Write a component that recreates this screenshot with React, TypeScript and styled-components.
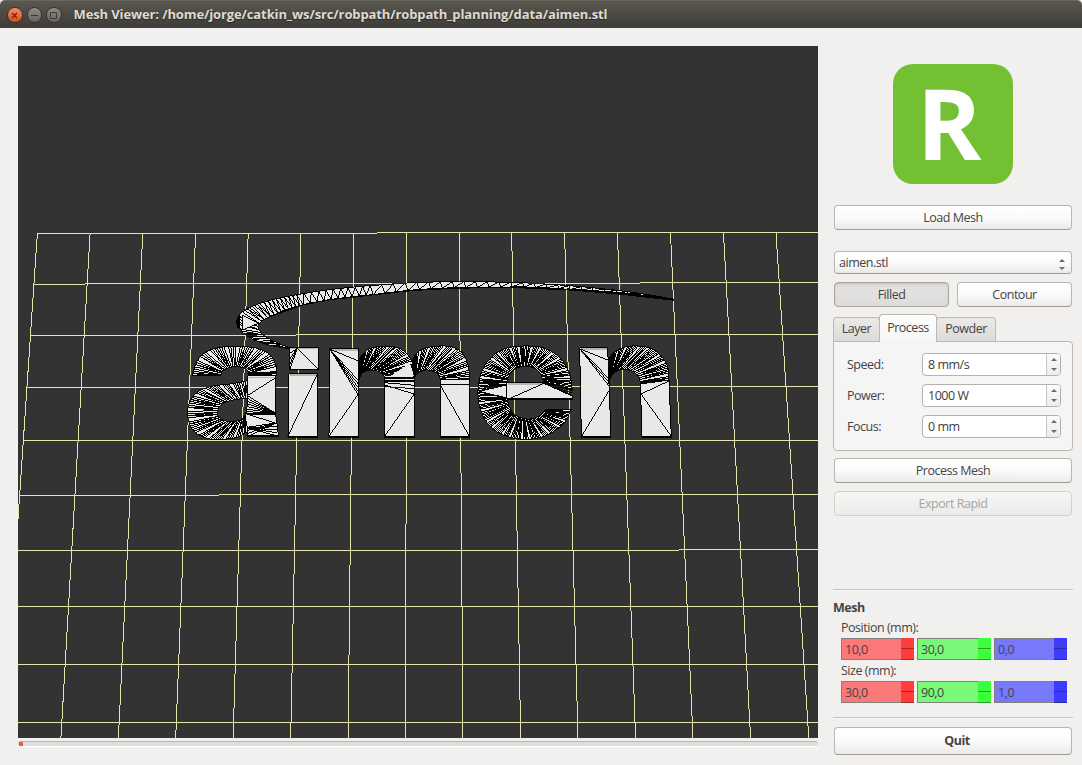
import React from 'react';
import styled, { createGlobalStyle, css } from 'styled-components';

const GlobalStyle = createGlobalStyle`
  * { box-sizing: border-box; }
  body { margin: 0; background: #f1f0ee; overflow: hidden; }
`;

/* ---------- window frame ---------- */

const Window = styled.div`
  width: 1082px;
  height: 765px;
  display: flex;
  flex-direction: column;
  background: #f1f0ee;
  font-family: 'Open Sans', 'Noto Sans', sans-serif;
  font-size: 12.5px;
  line-height: 18px;
  letter-spacing: -0.48px;
  color: #444444;
  white-space: nowrap;
`;

const TitleBar = styled.header`
  height: 28px;
  flex: none;
  display: flex;
  align-items: center;
  gap: 4px;
  padding: 1px 7px 0;
  border-radius: 5px 5px 0 0;
  border-top: 1px solid #69665e;
  background: linear-gradient(#5a574e, #3d3c38);
`;

const Title = styled.h1`
  margin: 0 0 0 8px;
  padding-bottom: 2px;
  font-size: 13px;
  font-weight: 700;
  letter-spacing: -0.12px;
  color: #dfdbd2;
  text-shadow: 0 1px 1px #2a2926;
`;

const WindowButton = styled.span<{ $close?: boolean }>`
  width: 15.5px;
  height: 15.5px;
  border-radius: 50%;
  border: 1px solid #33322e;
  display: grid;
  place-items: center;
  background: ${(p) => (p.$close ? 'linear-gradient(#f58a66, #de4c19)' : 'linear-gradient(#8f8c84, #66645d)')};
  svg { display: block; }
`;

const Body = styled.main`
  flex: 1;
  display: flex;
  padding: 18px 9px 0 18px;
  gap: 15px;
`;

/* ---------- 3D view ---------- */

const ViewColumn = styled.section`
  width: 800px;
`;

const Scene = styled.svg`
  display: block;
  width: 800px;
  height: 692px;
  background: #333333;
`;

const Track = styled.div`
  height: 6px;
  margin-top: 3px;
  border-radius: 3px;
  border-top: 1px solid #bcb4ae;
  border-bottom: 1px solid #ffffff;
  background: #e0dfdd;
`;

const Handle = styled.div`
  width: 4px;
  height: 4px;
  margin-left: 1px;
  border-radius: 1px;
  background: #e8713f;
  border: 1px solid #c4532a;
`;

/* ---------- side panel ---------- */

const Side = styled.aside`
  width: 240px;
  display: flex;
  flex-direction: column;
`;

const Logo = styled.div`
  width: 120px;
  height: 120px;
  margin: 18px auto 21px;
  padding-right: 8px;
  border-radius: 20px;
  background: #73c032;
  color: #ffffff;
  font: 700 98px/116px 'Open Sans', sans-serif;
  letter-spacing: 0;
  text-align: center;
`;

const Button = styled.button<{ $pressed?: boolean; $bold?: boolean; $h?: number }>`
  flex: 1 1 0;
  height: ${(p) => p.$h ?? 25}px;
  padding: 0 0 0 ${(p) => (p.$bold ? 8 : 0)}px;
  font: inherit;
  line-height: ${(p) => (p.$h ?? 25) - 2}px;
  font-weight: ${(p) => (p.$bold ? 700 : 400)};
  letter-spacing: inherit;
  color: inherit;
  border: 1px solid #b9b6b2;
  border-bottom-color: #a09d99;
  border-radius: 4px;
  background: linear-gradient(#ffffff, #fbfbfb 50%, #ebeae9);
  &:disabled {
    color: #a5a4a2;
    border-color: #d3d1ce;
    background: linear-gradient(#f6f6f5, #ecebe9);
  }
  ${(p) =>
    p.$pressed &&
    css`
      background: linear-gradient(#dbd9d6, #e4e2e0 30%, #dddbd9);
      border-color: #a9a5a0;
      box-shadow: inset 0 1px 2px #c5c2be;
    `}
`;

const ButtonRow = styled.div<{ $top?: number }>`
  display: flex;
  flex: none;
  gap: 8px;
  padding: 0 1px;
  margin-top: ${(p) => p.$top ?? 0}px;
`;

const Combo = styled.div`
  height: 23px;
  flex: none;
  margin: 21px 1px 0;
  padding: 0 5px 0 4px;
  line-height: 21px;
  display: flex;
  align-items: center;
  justify-content: space-between;
  border: 1px solid #b9b6b2;
  border-bottom-color: #a09d99;
  border-radius: 4px;
  background: linear-gradient(#ffffff, #fbfbfb 50%, #ebeae9);
  svg { margin-top: 3px; }
`;

const Tabs = styled.nav`
  display: flex;
  flex: none;
  align-items: flex-end;
  height: 28px;
  margin-top: 6px;
`;

const Tab = styled.div<{ $w: number; $active?: boolean }>`
  width: ${(p) => p.$w}px;
  height: 24px;
  text-align: center;
  line-height: 22px;
  border: 1px solid #bcb8b3;
  border-bottom: 0;
  border-radius: 4px 4px 0 0;
  background: linear-gradient(#eceae8, #dcdad7);
  ${(p) =>
    p.$active &&
    css`
      position: relative;
      height: 28px;
      line-height: 26px;
      margin: 0 -1px -1px;
      background: linear-gradient(#fdfdfd, #f6f6f5);
    `}
`;

const Panel = styled.div`
  height: 110px;
  flex: none;
  margin-bottom: 7px;
  padding: 11px 11px 0 13px;
  display: flex;
  flex-direction: column;
  gap: 7px;
  border: 1px solid #bcb8b3;
  border-radius: 0 4px 4px 4px;
  background: #f5f5f5;
`;

const Field = styled.label`
  display: flex;
  justify-content: space-between;
  height: 24px;
  line-height: 23px;
`;

const Spin = styled.span`
  width: 139px;
  height: 23px;
  display: flex;
  border: 1px solid #b5b2ae;
  border-radius: 4px;
  background: #ffffff;
  color: #3c3c3c;
  overflow: hidden;
`;

const SpinValue = styled.span`
  flex: 1;
  padding-left: 5px;
  line-height: 21px;
`;

const SpinArrows = styled.span`
  width: 14px;
  padding-left: 3px;
  display: grid;
  align-items: center;
  border-left: 1px solid #c9c6c2;
  background: linear-gradient(#fbfbfb, #ececea);
`;

const Rule = styled.hr<{ $top: number }>`
  width: 240px;
  flex: none;
  height: 2px;
  margin: ${(p) => p.$top}px 0 0;
  border: 0;
  border-top: 1px solid #c6c3c0;
  border-bottom: 1px solid #fafafa;
`;

const GroupTitle = styled.h2`
  margin: 7px 0 0;
  font-size: 12.5px;
  line-height: 20px;
  font-weight: 700;
`;

const Caption = styled.div`
  margin: 0 0 0 8px;
  height: 20px;
  line-height: 20px;
`;

const AxisRow = styled.div`
  display: grid;
  grid-template-columns: 73px 74px 73px;
  gap: 3px;
  margin: 0 0 1px 8px;
`;

const AxisSpin = styled.div<{ $base: string }>`
  height: 22px;
  display: flex;
  border: 1px solid #82807c;
  border-right: 0;
  background: ${(p) => p.$base};
  line-height: 22px;
  span { flex: 1; height: 20px; padding-left: 3px; }
`;

const AxisArrows = styled.div<{ $color: string; $line: string }>`
  width: 13px;
  height: 22px;
  margin: -1px 0;
  border-bottom: 1px solid ${(p) => p.$line};
  background: linear-gradient(${(p) => p.$line}, ${(p) => p.$line}) 0 10px / 13px 1px no-repeat ${(p) => p.$color};
`;

const Arrows = ({ gap }: { gap: number }) => (
  <svg width="8" height={gap + 8} viewBox={`0 0 8 ${gap + 8}`}>
    <path d="M1 4L4 1L7 4Z" fill="#6a6a6a" />
    <path d={`M1 ${gap + 4}H7L4 ${gap + 7}Z`} fill="#6a6a6a" />
  </svg>
);

/* ---------- mesh geometry ---------- */

type P = [number, number];

/* Catmull-Rom curve through the key points, resampled to n + 1 equally spaced points */
function curve(keys: P[], n: number): P[] {
  const dense: P[] = [];
  for (let i = 0; i < keys.length - 1; i++) {
    const a = keys[Math.max(0, i - 1)];
    const b = keys[i];
    const c = keys[i + 1];
    const d = keys[Math.min(keys.length - 1, i + 2)];
    for (let s = 0; s < 16; s++) {
      const t = s / 16;
      const f = (k: 0 | 1) =>
        0.5 * (2 * b[k] + (c[k] - a[k]) * t + (2 * a[k] - 5 * b[k] + 4 * c[k] - d[k]) * t * t + (3 * b[k] - a[k] - 3 * c[k] + d[k]) * t * t * t);
      dense.push([f(0), f(1)]);
    }
  }
  dense.push(keys[keys.length - 1]);
  const len = [0];
  for (let i = 1; i < dense.length; i++) {
    len.push(len[i - 1] + Math.hypot(dense[i][0] - dense[i - 1][0], dense[i][1] - dense[i - 1][1]));
  }
  const out: P[] = [];
  let j = 0;
  for (let i = 0; i <= n; i++) {
    const target = (len[len.length - 1] * i) / n;
    while (j < len.length - 2 && len[j + 1] < target) j++;
    const t = (target - len[j]) / (len[j + 1] - len[j] || 1);
    out.push([dense[j][0] + (dense[j + 1][0] - dense[j][0]) * t, dense[j][1] + (dense[j + 1][1] - dense[j][1]) * t]);
  }
  return out;
}

const path = (pts: P[]) => 'M' + pts.map((p) => `${p[0].toFixed(1)} ${p[1].toFixed(1)}`).join('L');

interface StripProps { outer: P[]; inner: P[]; n: number; zigzag?: boolean; edge?: number }

/* a curved band of triangles: ribs meet the inner edge in pairs, with a few wider facets left open */
const Strip = ({ outer, inner, n, zigzag, edge = 3 }: StripProps) => {
  const o = curve(outer, n);
  const i = curve(inner, n);
  let ribs = '';
  for (let k = 0; k < n; k++) {
    if (zigzag) {
      ribs += path([o[k], i[k], o[k + 1]]);
    } else if ((k * 5) % 13 > 1) {
      ribs += path([o[k], i[k - (k % 2)]]);
      if (k % 4 === 1) ribs += path([o[k], i[k + 1]]);
    }
  }
  return (
    <g>
      <path d={path([...o, ...[...i].reverse()]) + 'Z'} fill="#e8e8e8" strokeWidth={edge} />
      <path d={ribs} />
    </g>
  );
};

interface PlateProps { pts: P[]; lines?: [P, P][]; shade?: boolean }

const Plate = ({ pts, lines = [], shade }: PlateProps) => (
  <g>
    <path d={path(pts) + 'Z'} fill="#e8e8e8" />
    {shade && <path d={path([[pts[0][0] + 3, pts[0][1] + 4], [pts[1][0] - 3, pts[1][1] + 4]])} stroke="#b4b4b4" strokeWidth="4" />}
    <path d={lines.map((l) => path(l)).join('')} />
  </g>
);

const fan = (from: P, a: P, b: P, n: number): [P, P][] =>
  Array.from({ length: n }, (_, k) => {
    const t = n === 1 ? 0 : k / (n - 1);
    return [from, [a[0] + (b[0] - a[0]) * t, a[1] + (b[1] - a[1]) * t]] as [P, P];
  });

const floorColumns: [number, number][] = [
  [37, 2.8], [89.7, 60.5], [142.4, 118], [195.2, 175.3], [247.8, 232.7], [300.5, 290.3], [353.3, 347.7], [406.2, 405.2],
  [458.8, 462.6], [511.3, 520.3], [564.2, 577.6], [617, 635.2], [670.1, 692.6], [723.1, 750.2], [775.6, 808.4],
];

/* each row: y with the x where it starts, in runs */
const floorRows: [number, number][][] = [
  [[37, 233], [377, 232]],
  [[34, 284], [85, 283], [640, 282]],
  [[30, 335], [296, 334]],
  [[27, 387], [507, 386]],
  [[23, 440]],
  [[19, 495], [219, 494]],
  [[18, 550], [679, 549]],
  [[18, 606]],
  [[18, 664]],
  [[18, 722]],
];

const floorPath =
  floorColumns.map(([a, b]) => `M${a + 0.4} 233L${b + 0.4} 738`).join('') +
  floorRows
    .map((runs) => runs.map(([x, y], i) => `M${x} ${y + 0.5}H${runs[i + 1] ? runs[i + 1][0] : 818}`).join(''))
    .join('');

const MeshView = () => (
  <Scene viewBox="18 46 800 692" shapeRendering="crispEdges">
    <path d={floorPath} stroke="#e3e3a6" fill="none" />
    <g transform="translate(180 270) scale(0.33333)" stroke="#000000" strokeWidth="3" fill="none">
      {/* swoosh */}
      <Strip
        n={34}
        outer={[[332, 236], [290, 230], [240, 217], [200, 197], [178, 175], [170, 155], [177, 137], [200, 117], [240, 100]]}
        inner={[[332, 234], [300, 222], [265, 205], [245, 190], [235, 175], [235, 165], [242, 156], [255, 147], [272, 139]]}
      />
      <Strip
        zigzag
        n={9}
        outer={[[240, 100], [290, 86], [350, 74]]}
        inner={[[272, 139], [320, 118], [370, 104]]}
      />
      <Strip
        zigzag
        n={10}
        outer={[[350, 74], [420, 63], [500, 53], [570, 47]]}
        inner={[[370, 104], [450, 89], [520, 80], [580, 74]]}
      />
      <Strip
        zigzag
        n={26}
        outer={[[570, 47], [700, 38], [830, 35], [1000, 37], [1060, 40], [1180, 48], [1320, 62], [1440, 80], [1482, 88]]}
        inner={[[580, 74], [700, 60], [830, 53], [1000, 51], [1060, 52], [1180, 59], [1320, 71], [1440, 86], [1482, 90]]}
      />
      <path d="M272 139L370 104L450 89L580 74L700 61L830 54L1000 52L1180 60L1320 72L1482 90" strokeWidth="4" />
      <path d="M1160 58L1320 69L1440 83L1482 89" strokeWidth="6" />
      <path d="M175 140V174" strokeWidth="8" />
      <path d="M187 135L235 160L187 180Z" fill="#e8e8e8" />

      {/* a */}
      <Strip
        n={50}
        outer={[[38, 318], [41, 300], [55, 268], [85, 242], [130, 231], [190, 230], [235, 236], [270, 255], [287, 285], [289, 318]]}
        inner={[[122, 318], [126, 307], [135, 298], [148, 293], [165, 290], [180, 291], [195, 296], [204, 304], [207, 318]]}
      />
      <Strip
        n={72}
        outer={[[203, 332], [150, 342], [100, 348], [60, 362], [35, 385], [24, 415], [24, 445], [35, 475], [60, 497], [95, 508], [130, 508], [170, 502], [203, 485]]}
        inner={[[203, 385], [170, 388], [140, 395], [120, 408], [112, 428], [116, 440], [130, 450], [150, 455], [175, 452], [190, 442], [197, 430]]}
      />
      <Plate
        shade
        pts={[[204, 318], [288, 318], [288, 440], [296, 500], [203, 500], [203, 480], [196, 440], [203, 400]]}
        lines={[
          [[287, 323], [204, 376]],
          ...fan([287, 430], [204, 378], [200, 425], 7),
          [[196, 430], [287, 460]],
          ...fan([287, 459], [200, 472], [203, 500], 4),
          ...fan([203, 474], [290, 470], [292, 498], 4),
        ]}
      />
      <path d="M206 309H288M200 432H286M204 499H297" strokeWidth="5" />

      {/* i */}
      <Plate
        shade
        pts={[[328, 232], [415, 232], [415, 299], [329, 299]]}
        lines={[[[352, 234], [413, 297]], ...fan([352, 234], [330, 250], [330, 297], 4)]}
      />
      <Plate shade pts={[[327, 311], [413, 311], [412, 500], [324, 500]]} lines={[[[411, 315], [325, 496]]]} />
      <path d="M329 299H416M323 501H413" strokeWidth="5" />

      {/* m */}
      <Strip
        n={48}
        outer={[[536, 270], [550, 250], [575, 234], [615, 228], [655, 234], [685, 255], [700, 290], [703, 322]]}
        inner={[[538, 330], [542, 315], [555, 304], [572, 300], [595, 304], [608, 313], [614, 322]]}
      />
      <Strip
        n={44}
        outer={[[696, 280], [705, 255], [730, 236], [775, 228], [820, 232], [850, 252], [865, 290], [868, 325]]}
        inner={[[703, 330], [708, 315], [725, 303], [745, 300], [768, 308], [778, 318], [782, 330]]}
      />
      <Plate
        shade
        pts={[[448, 236], [536, 236], [536, 500], [447, 500]]}
        lines={[[[450, 238], [534, 272]], ...fan([450, 238], [534, 330], [534, 374], 5), [[534, 374], [448, 497]]]}
      />
      <Plate
        pts={[[614, 322], [703, 322], [703, 500], [613, 500]]}
        lines={[[[614, 345], [703, 372]], [[614, 350], [703, 356]], [[614, 338], [703, 346]], [[703, 372], [615, 497]]]}
      />
      <path d="M630 319L690 279L702 319Z" fill="#e8e8e8" stroke="none" />
      <Plate pts={[[782, 328], [868, 328], [868, 500], [782, 500]]} lines={[[[782, 344], [868, 344]], [[782, 347], [867, 497]]]} />
      <path d="M614 326H703M614 333H703M446 501H537M612 501H704M781 501H869" strokeWidth="5" />

      {/* e */}
      <Strip
        n={86}
        outer={[[894, 362], [897, 335], [905, 305], [922, 275], [955, 245], [995, 231], [1035, 228], [1080, 231], [1120, 248], [1152, 278], [1170, 315], [1177, 362]]}
        inner={[[980, 346], [981, 335], [990, 312], [1010, 294], [1035, 290], [1060, 293], [1080, 310], [1092, 340]]}
      />
      <Strip
        n={86}
        outer={[[894, 362], [895, 390], [902, 420], [922, 460], [955, 488], [995, 503], [1040, 508], [1085, 501], [1125, 482], [1155, 455], [1173, 420]]}
        inner={[[980, 375], [984, 395], [990, 415], [1005, 435], [1040, 447], [1070, 442], [1085, 430], [1096, 420]]}
      />
      <Plate
        shade
        pts={[[980, 338], [1092, 338], [1176, 376], [1177, 388], [980, 388]]}
        lines={[[[988, 386], [1092, 340]], ...fan([1092, 340], [1176, 360], [1176, 378], 3)]}
      />
      <Plate pts={[[898, 364], [980, 345], [980, 384]]} />
      <path d="M980 387H1178" strokeWidth="6" />
      <path d="M980 338V388M1096 420H1175" />

      {/* n */}
      <Strip
        n={50}
        outer={[[1284, 268], [1305, 245], [1335, 231], [1375, 228], [1415, 236], [1445, 260], [1463, 290], [1467, 330]]}
        inner={[[1288, 345], [1292, 322], [1310, 303], [1335, 298], [1360, 305], [1376, 320], [1381, 340]]}
      />
      <Plate
        shade
        pts={[[1199, 233], [1283, 233], [1287, 340], [1293, 500], [1204, 500]]}
        lines={[[[1200, 237], [1283, 270]], ...fan([1200, 237], [1286, 325], [1287, 348], 3), [[1288, 360], [1206, 497]]]}
      />
      <Plate
        pts={[[1381, 342], [1467, 330], [1474, 500], [1386, 500]]}
        lines={[[[1467, 333], [1383, 372]], [[1383, 372], [1473, 497]]]}
      />
      <path d="M1203 501H1294M1385 501H1475M1380 336L1450 330" strokeWidth="5" />
    </g>
    <path d={floorPath} stroke="#ffffc0" strokeOpacity="0.12" fill="none" />
  </Scene>
);

/* ---------- application ---------- */

const axes = [
  { base: '#fa7878', color: '#ff3c3c', line: '#9c2c2c' },
  { base: '#78fa78', color: '#3cff3c', line: '#2c9c2c' },
  { base: '#7878fa', color: '#3c3cff', line: '#2c2c9c' },
];

const AxisGroup = ({ values }: { values: string[] }) => (
  <AxisRow>
    {values.map((v, i) => (
      <AxisSpin key={i} $base={axes[i].base}>
        <span>{v}</span>
        <AxisArrows $color={axes[i].color} $line={axes[i].line} />
      </AxisSpin>
    ))}
  </AxisRow>
);

const fields = [
  ['Speed:', '8 mm/s'],
  ['Power:', '1000 W'],
  ['Focus:', '0 mm'],
];

export default function App() {
  return (
    <Window>
      <GlobalStyle />
      <TitleBar>
        <WindowButton $close>
          <svg width="7" height="7" viewBox="0 0 7 7"><path d="M1 1L6 6M6 1L1 6" stroke="#5c2a18" strokeWidth="1.2" /></svg>
        </WindowButton>
        <WindowButton>
          <svg width="7" height="7" viewBox="0 0 7 7"><path d="M0 3.5H7" stroke="#3c3b37" /></svg>
        </WindowButton>
        <WindowButton>
          <svg width="7" height="7" viewBox="0 0 7 7"><path d="M.5 .5H6.500V6.500H.5Z" stroke="#3c3b37" fill="none" /></svg>
        </WindowButton>
        <Title>Mesh Viewer: /home/jorge/catkin_ws/src/robpath/robpath_planning/data/aimen.stl</Title>
      </TitleBar>
      <Body>
        <ViewColumn>
          <MeshView />
          <Track><Handle /></Track>
        </ViewColumn>
        <Side>
          <Logo>R</Logo>
          <ButtonRow><Button>Load Mesh</Button></ButtonRow>
          <Combo>aimen.stl<Arrows gap={5} /></Combo>
          <ButtonRow $top={8}>
            <Button $pressed>Filled</Button>
            <Button>Contour</Button>
          </ButtonRow>
          <Tabs>
            <Tab $w={47}>Layer</Tab>
            <Tab $w={58} $active>Process</Tab>
            <Tab $w={60}>Powder</Tab>
          </Tabs>
          <Panel>
            {fields.map(([name, value]) => (
              <Field key={name}>
                {name}
                <Spin>
                  <SpinValue>{value}</SpinValue>
                  <SpinArrows><Arrows gap={7} /></SpinArrows>
                </Spin>
              </Field>
            ))}
          </Panel>
          <ButtonRow><Button>Process Mesh</Button></ButtonRow>
          <ButtonRow $top={8}><Button disabled>Export Rapid</Button></ButtonRow>
          <Rule $top={73} />
          <GroupTitle>Mesh</GroupTitle>
          <Caption>Position (mm):</Caption>
          <AxisGroup values={['10,0', '30,0', '0,0']} />
          <Caption>Size (mm):</Caption>
          <AxisGroup values={['30,0', '90,0', '1,0']} />
          <Rule $top={13} />
          <ButtonRow $top={8}><Button $bold $h={28}>Quit</Button></ButtonRow>
        </Side>
      </Body>
    </Window>
  );
}
